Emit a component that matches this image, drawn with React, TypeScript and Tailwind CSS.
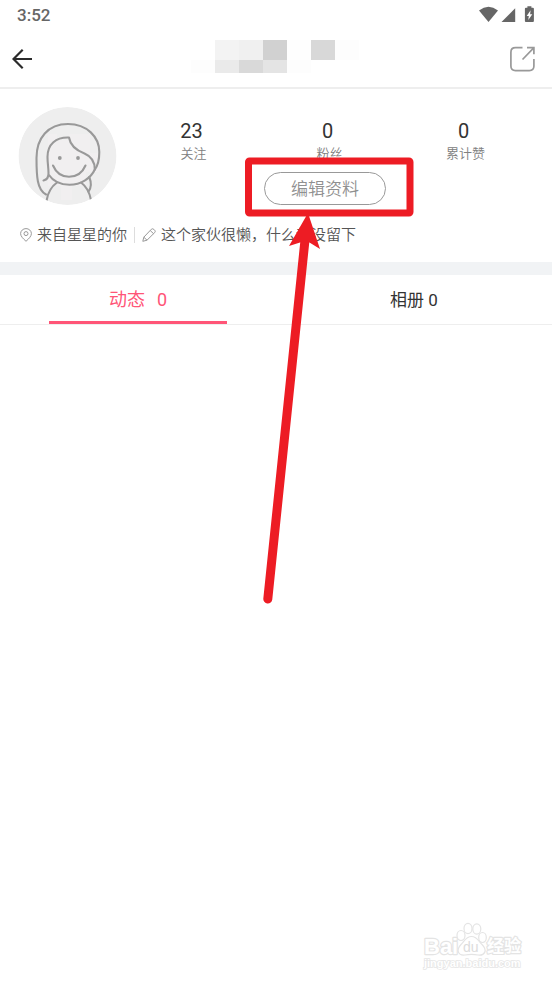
import React from "react";

const stats = [
  { value: "23", label: "关注" },
  { value: "0", label: "粉丝" },
  { value: "0", label: "累计赞" },
];

const maskedName = [
  ["bg-white", "bg-[#f3f3f3]", "bg-[#f0f0f0]", "bg-[#d1d1d1]", "bg-[#fefefe]", "bg-[#d8d8d8]", "bg-[#fdfdfd]"],
  ["bg-[#fdfdfd]", "bg-[#eaeaea]", "bg-[#d9d9d9]", "bg-[#e4e4e4]", "bg-[#fdfdfd]", "bg-white", "bg-white"],
];

function StatusBar() {
  return (
    <div className="flex h-[30px] items-center justify-between pl-[17px] pr-[17px] text-[#666]">
      <span className="text-[17px] leading-5 font-medium">3:52</span>
      <svg width="57" height="18" viewBox="478 6 57 18" fill="#666" aria-hidden="true">
        <path d="M479 10.4Q488.500 3 498 10.400L488.500 22Z" />
        <path d="M515.200 8.200V22H501.500Z" />
        <path d="M527.400 6.300h4v1.500h1.500q1 0 1 1V21q0 1-1 1h-7q-1 0-1-1V8.800q0-1 1-1h1.500Z" />
        <path d="M530.600 10.200L526.700 16h2.100l-.5 4 4-5.800h-2.200Z" fill="#fff" />
      </svg>
    </div>
  );
}

function Header() {
  return (
    <header className="flex h-[59px] items-center justify-between border-b-2 border-[#eee] pl-[12px] pr-[16px]">
      <button type="button" aria-label="返回" className="w-7">
        <svg width="21" height="20" viewBox="12 49 21 20" fill="none" stroke="#2b2b2b" strokeWidth="2.200">
          <path d="M32 59H13.500M22.700 49.800L13.500 59L22.700 68.200" />
        </svg>
      </button>
      <div className="pb-[5px]">
        {maskedName.map((row, r) => (
          <div key={r} className={r === 0 ? "flex h-5" : "flex h-[13px]"}>
            {row.map((tone, c) => (
              <span key={c} className={`w-6 ${tone}`} />
            ))}
          </div>
        ))}
      </div>
      <button type="button" aria-label="分享">
        <svg width="26" height="26" viewBox="510 46 26 26" fill="none" stroke="#999" strokeWidth="1.700">
          <path d="M522.500 47.700H515.500Q510.900 47.700 510.900 52.300V66.100Q510.900 70.700 515.500 70.700H529.300Q533.900 70.700 533.900 66.100V59" />
          <path d="M527 47.700H533.900V54.300M533.500 48.100L522.500 59.500" />
        </svg>
      </button>
    </header>
  );
}

function Avatar() {
  return (
    <svg className="shrink-0" width="99" height="99" viewBox="18 107 99 99" role="img" aria-label="头像">
      <defs>
        <clipPath id="avatar-circle">
          <circle cx="67.500" cy="156" r="49" />
        </clipPath>
      </defs>
      <g clipPath="url(#avatar-circle)">
        <circle cx="67.500" cy="156" r="49" fill="#eee" />
        <path d="M48 134h9v6h12v-6h21v19h9v19H86v14H72v14H61v-14H48Z" fill="#f1eff0" />
        <g fill="none" stroke="#999" strokeWidth="2.100" strokeLinecap="round" strokeLinejoin="round">
          <path d="M46 194.500C37 190 36.500 176 36.500 158C36.500 138 48 124 68 124C87 124 99.300 137 99.300 152C99.300 160 97.500 166 94.800 169.500" />
          <path d="M43.500 180.500C47.500 179.500 48.700 176.500 48.500 173C48.500 168 47.500 163 47.500 157C47.500 144 56 137 69 137.500C70.500 147 78 151 84.500 153.500C91.500 156.500 94.800 162 94.800 169.500C91 178 81 184.800 69.500 184.800C61 184.800 53 181 48.500 174.500" />
          <path d="M53 165.500C56 172.500 61.500 176.700 69 176.700C76.500 176.700 82.500 172.500 85.500 165.500" />
          <path d="M46.700 200C48 192 51.500 186.500 57 182.500M81 182.500C86.500 186.500 89.500 192 91 200" />
          <path d="M89.300 177C92 184 90.500 189 88.500 191.500" />
        </g>
        <circle cx="59.800" cy="158" r="1.900" fill="#999" />
        <circle cx="78" cy="158" r="1.900" fill="#999" />
      </g>
    </svg>
  );
}

function Profile() {
  return (
    <section className="h-[173px] pt-[18px]">
      <div className="flex pl-[18px] pr-[18px]">
        <Avatar />
        <div className="ml-[9px] flex-1">
          <dl className="flex pt-3">
            {stats.map((s) => (
              <div key={s.label} className="flex flex-1 flex-col-reverse pr-px text-center">
                <dt className="text-[13px] leading-[22px] font-[350] text-[#808080]">{s.label}</dt>
                <dd className="pr-1 text-[20px] leading-6 text-[#333]">{s.value}</dd>
              </div>
            ))}
          </dl>
          <div className="mt-[7px] flex justify-center pr-[10px]">
            <button
              type="button"
              className="h-[33px] w-[122px] rounded-full border border-[#999] text-[17px] leading-5 font-[350] text-[#909090]"
            >
              编辑资料
            </button>
          </div>
        </div>
      </div>
      <div className="mt-[17px] flex h-6 items-center pl-5 text-[15px] leading-6 font-[350] text-[#555]">
        <svg className="mr-[5px]" width="12" height="14" viewBox="0 0 12 14" fill="none" stroke="#999" strokeWidth="1">
          <path d="M6 13.300C3 10.500 .6 8.200 .6 5.600A5.400 5 0 0 1 11.400 5.600C11.400 8.200 9 10.500 6 13.300Z" />
          <circle cx="6" cy="5.600" r="2" />
        </svg>
        <span>来自星星的你</span>
        <span className="mx-[7px] h-4 w-px bg-[#ddd]" />
        <svg className="mr-[5px]" width="14" height="14" viewBox="0 0 14 14" fill="none" stroke="#999" strokeWidth="1" strokeLinejoin="round">
          <path d="M.8 13.300L1.800 9.200L9.300 1.300Q10.500 .2 11.900 1.400L12.700 2.200Q13.800 3.400 12.700 4.600L5 12.200ZM1.800 9.200L5 12.200M8.200 2.500L11.600 5.700" />
        </svg>
        <span>这个家伙很懒，什么都没留下</span>
      </div>
    </section>
  );
}

function Tabs() {
  return (
    <nav className="flex h-[50px] border-b border-[#eee] text-[17px] leading-6">
      <button type="button" className="flex flex-1 justify-center">
        <span className="flex h-[49px] w-[178px] items-center justify-center gap-3 border-b-[3px] border-[#ff5577] pt-[3px] text-[18px] text-[#ff5577]">
          <span>动态</span>
          <span>0</span>
        </span>
      </button>
      <button type="button" className="flex-1 text-[#333]">
        相册 0
      </button>
    </nav>
  );
}

function Annotation() {
  return (
    <svg
      className="pointer-events-none absolute left-1/2 top-[150px] -ml-[36px]"
      width="180"
      height="460"
      viewBox="240 150 180 460"
      aria-hidden="true"
    >
      <rect x="248.500" y="161" width="161.500" height="52" rx="1" fill="none" stroke="#ed1c24" strokeWidth="7" strokeLinejoin="round" />
      <path d="M305 240L267.800 599" stroke="#ed1c24" strokeWidth="9" strokeLinecap="round" />
      <path d="M308 213L289 246L300 242.500H309.500L320 249Z" fill="#ed1c24" />
    </svg>
  );
}

function Watermark() {
  return (
    <svg
      className="pointer-events-none absolute bottom-[10px] right-[26px]"
      width="104"
      height="54"
      viewBox="422 919 104 54"
      fill="#fff"
      stroke="#e4e4e4"
      strokeWidth="1.200"
      fontFamily="'Liberation Sans', 'Noto Sans CJK SC', sans-serif"
      fontWeight="700"
    >
      <g strokeWidth="2.400" strokeLinejoin="round" paintOrder="stroke">
        <text x="424" y="954" fontSize="22">Bai</text>
        <text x="487" y="952" fontSize="17">经验</text>
      </g>
      <path d="M471.500 936.500C477 936.500 478.500 941 482 944.500C488 950.500 484.500 956 478 955Q471.500 953.800 465 955C458.500 956 455.500 950.500 461 944.500C464.500 941 466 936.500 471.500 936.500Z" />
      <ellipse cx="461" cy="935.500" rx="4" ry="5" />
      <ellipse cx="468" cy="928.500" rx="4" ry="5.200" />
      <ellipse cx="476.800" cy="929" rx="4" ry="5.200" />
      <ellipse cx="482.500" cy="937.500" rx="3.800" ry="5" />
      <text x="463" y="952" fontSize="14" fontWeight="400" stroke="none" fill="#dcdcdc">du</text>
      <text x="424" y="967" fontSize="11" strokeWidth="1.600" stroke="#e6e6e6" paintOrder="stroke">jingyan.baidu.com</text>
    </svg>
  );
}

export default function App() {
  return (
    <main className="relative min-h-screen overflow-hidden bg-white font-[Roboto,'Noto_Sans_CJK_SC',sans-serif]">
      <StatusBar />
      <Header />
      <Profile />
      <div className="h-[13px] bg-[#f1f3f5]" />
      <Tabs />
      <Annotation />
      <Watermark />
    </main>
  );
}
